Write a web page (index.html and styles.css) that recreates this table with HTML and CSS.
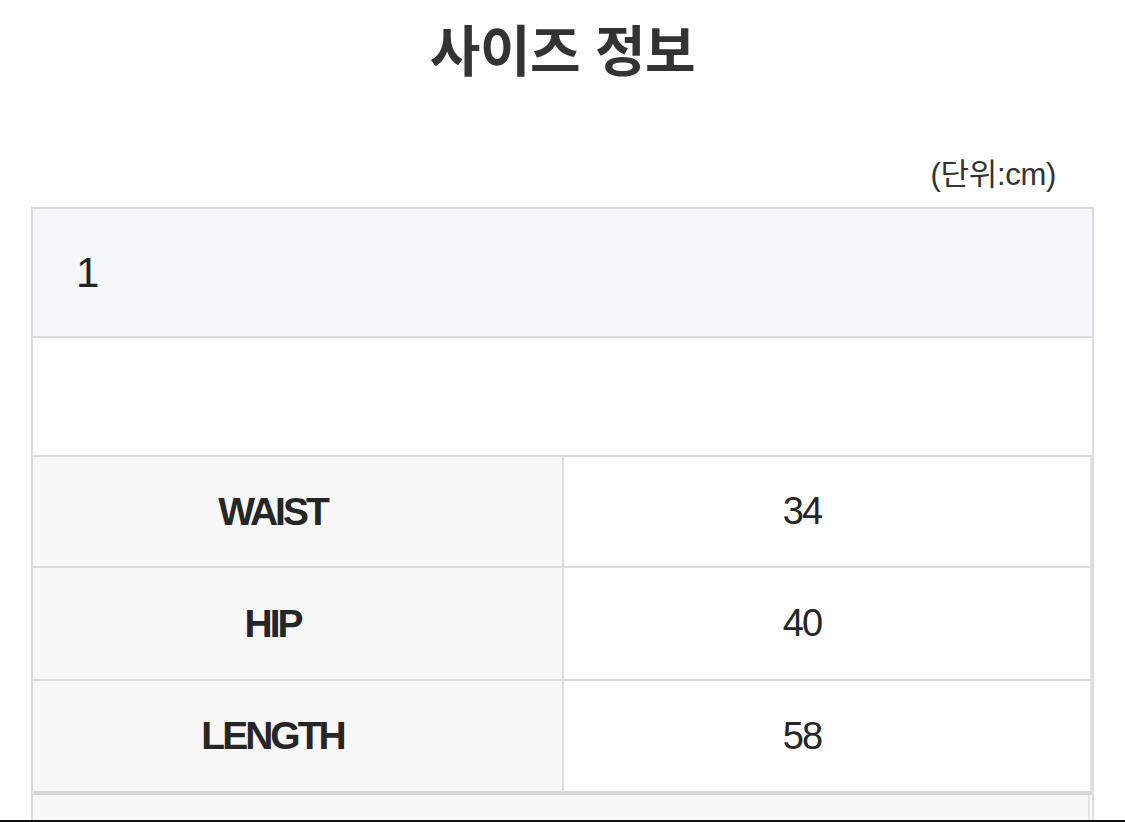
FILE: index.html
```html
<!DOCTYPE html>
<html lang="ko">
<head>
<meta charset="utf-8">
<title>사이즈 정보</title>
<link rel="stylesheet" href="styles.css">
</head>
<body>
<div class="page">
  <h1 class="title">사이즈 정보</h1>
  <div class="unit">(단위:cm)</div>
  <div class="table">
    <div class="head-row">1</div>
    <div class="empty-row"></div>
    <div class="row">
      <div class="label">WAIST</div>
      <div class="value">34</div>
    </div>
    <div class="row row-hip">
      <div class="label">HIP</div>
      <div class="value">40</div>
    </div>
    <div class="row row-last">
      <div class="label">LENGTH</div>
      <div class="value">58</div>
    </div>
    <div class="next-row"><div class="next-inner"></div></div>
  </div>
  <div class="bottom-line"></div>
</div>
</body>
</html>
```
FILE: styles.css
```css
html, body {
  margin: 0;
  padding: 0;
  background: #ffffff;
}
body {
  width: 1125px;
  height: 822px;
  overflow: hidden;
  font-family: "Liberation Sans", "Noto Sans CJK KR", Arial, sans-serif;
  color: #262626;
}
.page {
  display: flex;
  flex-direction: column;
  height: 822px;
}
.title {
  margin: 0;
  height: 94px;
  line-height: 94px;
  text-align: center;
  font-family: "Noto Sans CJK KR", sans-serif;
  font-size: 55px;
  font-weight: 700;
  color: #333333;
  letter-spacing: -0.5px;
}
.unit {
  margin-top: 62px;
  height: 38px;
  line-height: 38px;
  text-align: right;
  padding-right: 69px;
  font-family: "Liberation Sans", "Noto Sans CJK KR", sans-serif;
  font-size: 31px;
  letter-spacing: -0.3px;
  color: #333333;
}
.table {
  margin: 13px 31px 0 31px;
  border: 2px solid #dcdcdc;
  border-bottom: none;
  display: flex;
  flex-direction: column;
  flex: 1;
}
.head-row {
  height: 127px;
  background: #f5f6fa;
  border-bottom: 2px solid #dcdcdc;
  display: flex;
  align-items: center;
  padding-left: 43px;
  font-size: 42px;
  color: #222222;
}
.empty-row {
  height: 117px;
  background: #ffffff;
  border-bottom: 2px solid #dcdcdc;
}
.row {
  height: 109px;
  display: flex;
  border-bottom: 2px solid #dcdcdc;
}
.row-hip {
  height: 111px;
}
.row-last {
  height: 110px;
  border-bottom: 4px solid #d8d8d8;
}
.label {
  width: 479px;
  padding-right: 50px;
  background: #f8f8f8;
  border-right: 2px solid #dcdcdc;
  display: flex;
  align-items: center;
  justify-content: center;
  font-size: 39px;
  font-weight: 700;
  letter-spacing: -3px;
  color: #262626;
}
.value {
  flex: 1;
  padding-right: 50px;
  background: #ffffff;
  border-right: 2px solid #e2e2e2;
  display: flex;
  align-items: center;
  justify-content: center;
  font-size: 38px;
  letter-spacing: -2px;
  color: #262626;
}
.next-row {
  flex: 1;
  display: flex;
}
.next-inner {
  flex: 1;
  background: #f7f8fa;
  margin-right: 2px;
  border-right: 2px solid #e2e2e2;
}
.bottom-line {
  height: 2px;
  background: #111111;
}
```
